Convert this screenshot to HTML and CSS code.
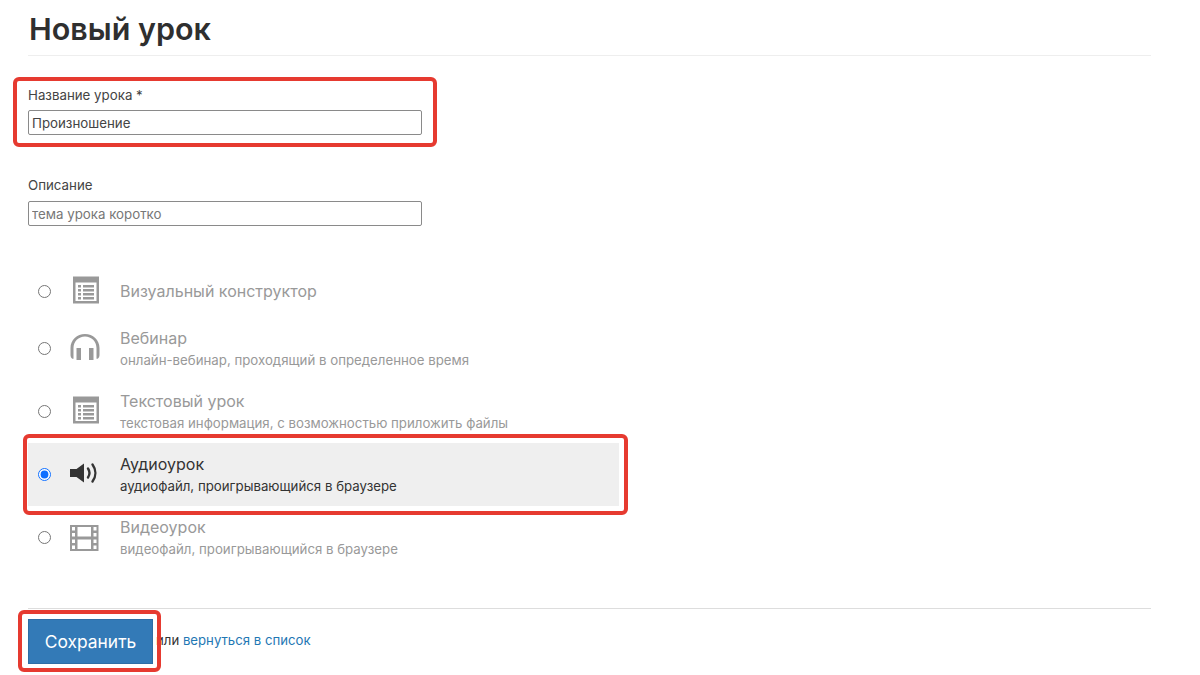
FILE: index.html
```html
<!DOCTYPE html>
<html lang="ru">
<head>
<meta charset="utf-8">
<title>Новый урок</title>
<link rel="stylesheet" href="styles.css">
</head>
<body>
<main class="page">
  <h1 class="title">Новый урок</h1>
  <form class="form">
    <div class="field mark mark-name">
      <label class="label" for="name">Название урока *</label>
      <input class="input" id="name" type="text" value="Произношение">
    </div>
    <div class="field field-desc">
      <label class="label" for="desc">Описание</label>
      <input class="input" id="desc" type="text" placeholder="тема урока коротко">
    </div>
    <div class="types">
      <label class="type type-first">
        <input class="radio" type="radio" name="type">
        <svg class="icon icon-up" viewBox="0 0 30 28"><use href="#list"/></svg>
        <span class="text"><span class="name">Визуальный конструктор</span></span>
      </label>
      <label class="type">
        <input class="radio" type="radio" name="type">
        <svg class="icon icon-up" viewBox="0 0 30 28"><path fill="#999" d="M15 1C7 1 .5 7 .5 15v7c0 1.500.6 3 1.800 3.700h1.200V15C3.500 8.500 8.500 3.500 15 3.500S26.500 8.500 26.500 15v10.700h1.200c1.200-.7 1.800-2.200 1.800-3.700v-7C29.500 7 23 1 15 1z"/><rect x="6.500" y="15" width="4.500" height="12" fill="#999"/><rect x="19" y="15" width="4.500" height="12" fill="#999"/></svg>
        <span class="text"><span class="name">Вебинар</span><span class="desc">онлайн-вебинар, проходящий в определенное время</span></span>
      </label>
      <label class="type">
        <input class="radio" type="radio" name="type">
        <svg class="icon icon-up" viewBox="0 0 30 28"><use href="#list"/></svg>
        <span class="text"><span class="name">Текстовый урок</span><span class="desc">текстовая информация, с возможностью приложить файлы</span></span>
      </label>
      <label class="type type-active mark mark-type">
        <input class="radio" type="radio" name="type" checked>
        <svg class="icon" viewBox="0 0 30 28"><path fill="#333" d="M0 8h6.500L14 2.500v19L6.500 16H0z"/><path fill="none" stroke="#333" stroke-width="2.400" stroke-linecap="round" d="M18 7.500c1.800 2.700 1.800 6.300 0 9M22.500 3.500c3.800 5.200 3.800 11.800 0 17"/></svg>
        <span class="text"><span class="name">Аудиоурок</span><span class="desc">аудиофайл, проигрывающийся в браузере</span></span>
      </label>
      <label class="type">
        <input class="radio" type="radio" name="type">
        <svg class="icon" viewBox="0 0 30 28"><path fill="#999" fill-rule="evenodd" d="M0 1h28.500v26H0zM2 3v3.500h3V3zM2 9v3.500h3V9zM2 15.500V19h3v-3.500zM2 21.500V25h3v-3.500zM23.500 3v3.500h3V3zM23.500 9v3.500h3V9zM23.500 15.500V19h3v-3.500zM23.500 21.500V25h3v-3.500zM7.500 3v9.500h13.500V3zM7.500 15.500V25h13.500v-9.500z"/></svg>
        <span class="text"><span class="name">Видеоурок</span><span class="desc">видеофайл, проигрывающийся в браузере</span></span>
      </label>
    </div>
    <footer class="actions">
      <button class="save mark mark-save" type="button">Сохранить</button>
      <span class="or">или <a class="back" href="#">вернуться в список</a></span>
    </footer>
  </form>
</main>
<svg class="defs" width="0" height="0"><defs>
  <symbol id="list" viewBox="0 0 30 28"><path fill="#999" fill-rule="evenodd" d="M3 .5h26v27H3zM5.500 6.500V25h21V6.500z"/><path fill="#999" d="M8 9h3v2.500H8zM13 9h11v2.500H13zM8 13h3v2.500H8zM13 13h11v2.500H13zM8 17h3v2.500H8zM13 17h11v2.500H13zM8 21h3v2.500H8zM13 21h11v2.500H13z"/></symbol>
</defs></svg>
</body>
</html>
```

FILE: styles.css
```css
* { box-sizing: border-box; }
html, body { margin: 0; padding: 0; background: #fff; }
body {
  font-family: "Inter", "Noto Sans", sans-serif;
  color: #333;
  height: 675px;
  overflow: hidden;
}
.page { width: 1123px; margin-left: 28px; }
.title {
  margin: 0;
  height: 56px;
  padding-top: 9px;
  padding-left: 1px;
  font-size: 30.500px;
  line-height: 40px;
  font-weight: 600;
  color: #2f2f2f;
  border-bottom: 1px solid #eee;
}
.field { width: 394px; }
.mark { position: relative; }
.mark::after {
  content: "";
  position: absolute;
  border: 4px solid #e63a30;
  border-radius: 6px;
  pointer-events: none;
}
.mark-name { margin-top: 29px; }
.mark-name::after { top: -8px; left: -15px; right: -15px; bottom: -12px; }
.field-desc { margin-top: 40px; }
.field-desc .input { margin-top: 6px; }
.label {
  display: block;
  height: 20px;
  font-size: 13.300px;
  line-height: 20px;
  color: #444;
}
.input {
  display: block;
  width: 394px;
  height: 25px;
  margin-top: 5px;
  padding: 0 3px;
  border: 1px solid #8a8a8a;
  border-radius: 2px;
  font: 13.300px "Inter", sans-serif;
  color: #444;
  outline: none;
  background: #fff;
}
.input::placeholder { color: #777; opacity: 1; }
.types { margin-top: 39px; width: 591px; }
.type {
  display: flex;
  align-items: center;
  height: 63px;
  color: #999;
}
.type-first { height: 52px; }
.type-active { background: #efefef; color: #333; }
.mark-type::after { top: -9px; left: -5px; right: -9px; bottom: -9px; }
.radio {
  flex: none;
  width: 13px;
  height: 13px;
  margin: 0 0 0 9.500px;
  accent-color: #0f6fff;
}
.icon { flex: none; width: 30px; height: 28px; margin-left: 19.500px; }
.icon-up { margin-bottom: 3px; }
.text { display: flex; flex-direction: column; margin-left: 20px; }
.name { font-size: 16px; line-height: 22px; }
.desc { font-size: 13.250px; line-height: 19px; margin-top: 2px; }
.actions {
  display: flex;
  align-items: center;
  margin-top: 39px;
  padding-top: 10px;
  border-top: 1px solid #ddd;
}
.save {
  flex: none;
  width: 125px;
  height: 45px;
  border: 1px solid #2e6da4;
  background: #337ab7;
  color: #fff;
  font: 17.400px "Inter", sans-serif;
  padding: 0;
}
.mark-save::after { top: -10px; left: -11px; right: -9px; bottom: -9px; }
.or { font-size: 13.200px; color: #333; margin-left: 3px; padding-bottom: 3px; }
.back { color: #1f78b4; text-decoration: none; }
.defs { position: absolute; }
```
